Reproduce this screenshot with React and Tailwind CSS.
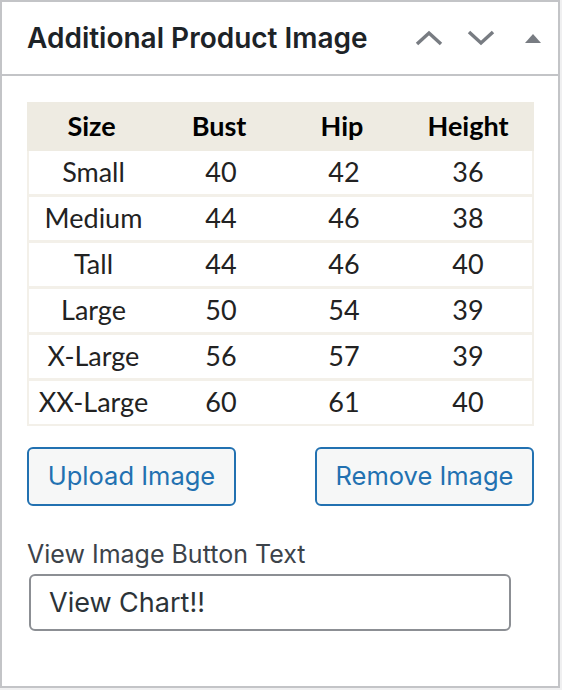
import React from 'react';

const ROWS = [
  ['Small', '40', '42', '36'],
  ['Medium', '44', '46', '38'],
  ['Tall', '44', '46', '40'],
  ['Large', '50', '54', '39'],
  ['X-Large', '56', '57', '39'],
  ['XX-Large', '60', '61', '40'],
];

const COLS = 'grid grid-cols-[129px_126px_120px_1fr]';

const SizeChart = () => (
  <div className="w-[507px] bg-[#f3f0e9] font-['Lato',sans-serif] text-[#1e1e1e]">
    <div className={`${COLS} h-[49px] items-center bg-[#eeebe2] text-[27px] font-bold text-black`}>
      <span className="text-center">Size</span>
      <span className="text-center">Bust</span>
      <span className="text-center">Hip</span>
      <span className="text-center">Height</span>
    </div>
    <div className="flex flex-col gap-[3px] px-[2px] pb-[2px]">
      {ROWS.map((r) => (
        <div key={r[0]} className={`${COLS} h-[43px] items-center bg-white text-[27px] text-[#222]`}>
          {r.map((c, i) => (
            <span key={i} className="text-center">{c}</span>
          ))}
        </div>
      ))}
    </div>
  </div>
);

export default function App() {
  return (
    <div className="w-[562px] h-[690px] bg-[#f0f0f1] font-['Inter',sans-serif]">
      <div className="w-[560px] h-[688px] border-2 border-[#c3c4c7] bg-white flex flex-col">
        {/* Header */}
        <div className="h-[74px] border-b-2 border-[#c3c4c7] flex items-center justify-between pl-[25px] pr-[17px]">
          <h2 className="text-[28px] font-semibold text-[#1d2327]">Additional Product Image</h2>
          <div className="flex items-center text-[#787c82]">
            <svg width="28" height="16" viewBox="0 0 28 16" className="mr-[24px]">
              <path d="M2 14 L14 3 L26 14" fill="none" stroke="currentColor" strokeWidth="3.5" />
            </svg>
            <svg width="28" height="16" viewBox="0 0 28 16" className="mr-[30px]">
              <path d="M2 2 L14 13 L26 2" fill="none" stroke="currentColor" strokeWidth="3.5" />
            </svg>
            <svg width="16" height="9" viewBox="0 0 16 9">
              <path d="M8 0 L16 9 L0 9 Z" fill="currentColor" />
            </svg>
          </div>
        </div>

        {/* Body */}
        <div className="px-[25px] pt-[26px]">
          <SizeChart />

          <div className="flex justify-between mt-[21px] w-[507px]">
            <button className="w-[209px] h-[59px] rounded-[6px] border-2 border-[#2271b1] bg-[#f6f7f7] text-[25.5px] text-[#2271b1]">
              Upload Image
            </button>
            <button className="w-[219px] h-[59px] rounded-[6px] border-2 border-[#2271b1] bg-[#f6f7f7] text-[25.5px] text-[#2271b1]">
              Remove Image
            </button>
          </div>

          <label className="block mt-[33px] text-[25px] leading-[30px] text-[#3c434a]">View Image Button Text</label>
          <input
            className="mt-[5px] ml-[2px] w-[482px] h-[57px] rounded-[6px] border-2 border-[#8c8f94] px-[18px] text-[27px] text-[#2c3338] outline-none"
            defaultValue="View Chart!!"
          />
        </div>
      </div>
    </div>
  );
}
